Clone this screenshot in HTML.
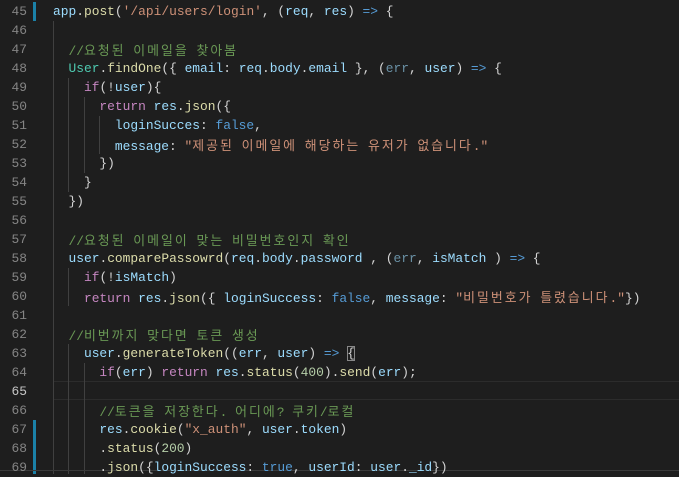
<!DOCTYPE html>
<html><head><meta charset="utf-8"><style>
body{margin:0;width:679px;height:474px;background:#1e1e1e;overflow:hidden;position:relative;font-family:"Liberation Mono","Noto Sans CJK KR",monospace;font-size:12.9px;}
.ln{position:absolute;left:0;width:27px;text-align:right;color:#858585;height:19px;line-height:19px;}
.c{position:absolute;left:53px;height:19px;line-height:19px;white-space:pre;color:#d4d4d4;}
.g{position:absolute;width:1px;background:#404040;}
.k{letter-spacing:2.0px;font-family:"Noto Sans CJK KR","Liberation Mono",sans-serif;}
.v{color:#9cdcfe}.f{color:#dcdcaa}.s{color:#ce9178}.m{color:#6a9955}.kw{color:#c586c0}.b{color:#569cd6}.t{color:#4ec9b0}.n{color:#b5cea8}.d{color:#9cdcfe;opacity:.6}
.bar{position:absolute;left:33px;width:3px;background:#1b81a8;}
</style></head><body>
<div class="bar" style="top:2px;height:19px"></div>
<div class="bar" style="top:420px;height:54px"></div>
<div style="position:absolute;left:53px;right:0;top:381px;height:17px;border-top:1px solid #2c2c2c;border-bottom:1px solid #2c2c2c"></div>
<div class="g" style="left:53px;top:21px;height:453px"></div>
<div class="g" style="left:68px;top:78px;height:114px"></div>
<div class="g" style="left:84px;top:97px;height:76px"></div>
<div class="g" style="left:99px;top:116px;height:38px"></div>
<div class="g" style="left:68px;top:268px;height:38px"></div>
<div class="g" style="left:68px;top:344px;height:130px"></div>
<div class="g" style="left:84px;top:363px;height:111px"></div>
<div style="position:absolute;left:0;right:0;top:470px;height:1px;background:#3a3a3a"></div>

<div class="ln" style="top:2px">45</div><div class="c" style="top:2px"><span class="v">app</span>.<span class="f">post</span>(<span class="s">'/api/users/login'</span>, (<span class="v">req</span>, <span class="v">res</span>) <span class="b">=&gt;</span> {</div>
<div class="ln" style="top:21px">46</div>
<div class="ln" style="top:40px">47</div><div class="c m" style="top:40px">  //<span class="k">요청된</span> <span class="k">이메일을</span> <span class="k">찾아봄</span></div>
<div class="ln" style="top:59px">48</div><div class="c" style="top:59px">  <span class="t">User</span>.<span class="f">findOne</span>({ <span class="v">email</span>: <span class="v">req</span>.<span class="v">body</span>.<span class="v">email</span> }, (<span class="d">err</span>, <span class="v">user</span>) <span class="b">=&gt;</span> {</div>
<div class="ln" style="top:78px">49</div><div class="c" style="top:78px">    <span class="kw">if</span>(!<span class="v">user</span>){</div>
<div class="ln" style="top:97px">50</div><div class="c" style="top:97px">      <span class="kw">return</span> <span class="v">res</span>.<span class="f">json</span>({</div>
<div class="ln" style="top:116px">51</div><div class="c" style="top:116px">        <span class="v">loginSucces</span>: <span class="b">false</span>,</div>
<div class="ln" style="top:135px">52</div><div class="c" style="top:135px">        <span class="v">message</span>: <span class="s">"<span class="k">제공된</span> <span class="k">이메일에</span> <span class="k">해당하는</span> <span class="k">유저가</span> <span class="k">없습니다</span>."</span></div>
<div class="ln" style="top:154px">53</div><div class="c" style="top:154px">      })</div>
<div class="ln" style="top:173px">54</div><div class="c" style="top:173px">    }</div>
<div class="ln" style="top:192px">55</div><div class="c" style="top:192px">  })</div>
<div class="ln" style="top:211px">56</div>
<div class="ln" style="top:230px">57</div><div class="c m" style="top:230px">  //<span class="k">요청된</span> <span class="k">이메일이</span> <span class="k">맞는</span> <span class="k">비밀번호인지</span> <span class="k">확인</span></div>
<div class="ln" style="top:249px">58</div><div class="c" style="top:249px">  <span class="v">user</span>.<span class="f">comparePassowrd</span>(<span class="v">req</span>.<span class="v">body</span>.<span class="v">password</span> , (<span class="d">err</span>, <span class="v">isMatch</span> ) <span class="b">=&gt;</span> {</div>
<div class="ln" style="top:268px">59</div><div class="c" style="top:268px">    <span class="kw">if</span>(!<span class="v">isMatch</span>)</div>
<div class="ln" style="top:287px">60</div><div class="c" style="top:287px">    <span class="kw">return</span> <span class="v">res</span>.<span class="f">json</span>({ <span class="v">loginSuccess</span>: <span class="b">false</span>, <span class="v">message</span>: <span class="s">"<span class="k">비밀번호가</span> <span class="k">틀렸습니다</span>."</span>})</div>
<div class="ln" style="top:306px">61</div>
<div class="ln" style="top:325px">62</div><div class="c m" style="top:325px">  //<span class="k">비번까지</span> <span class="k">맞다면</span> <span class="k">토큰</span> <span class="k">생성</span></div>
<div class="ln" style="top:344px">63</div><div class="c" style="top:344px">    <span class="v">user</span>.<span class="f">generateToken</span>((<span class="v">err</span>, <span class="v">user</span>) <span class="b">=&gt;</span> <span style="outline:1px solid #888;outline-offset:-1px">{</span></div>
<div class="ln" style="top:363px">64</div><div class="c" style="top:363px">      <span class="kw">if</span>(<span class="v">err</span>) <span class="kw">return</span> <span class="v">res</span>.<span class="f">status</span>(<span class="n">400</span>).<span class="f">send</span>(<span class="v">err</span>);</div>
<div class="ln" style="top:382px;color:#c6c6c6">65</div>
<div class="ln" style="top:401px">66</div><div class="c m" style="top:401px">      //<span class="k">토큰을</span> <span class="k">저장한다</span>. <span class="k">어디에</span>? <span class="k">쿠키</span>/<span class="k">로컬</span></div>
<div class="ln" style="top:420px">67</div><div class="c" style="top:420px">      <span class="v">res</span>.<span class="f">cookie</span>(<span class="s">"x_auth"</span>, <span class="v">user</span>.<span class="v">token</span>)</div>
<div class="ln" style="top:439px">68</div><div class="c" style="top:439px">      .<span class="f">status</span>(<span class="n">200</span>)</div>
<div class="ln" style="top:458px">69</div><div class="c" style="top:458px">      .<span class="f">json</span>({<span class="v">loginSuccess</span>: <span class="b">true</span>, <span class="v">userId</span>: <span class="v">user</span>.<span class="v">_id</span>})</div>
</body></html>
